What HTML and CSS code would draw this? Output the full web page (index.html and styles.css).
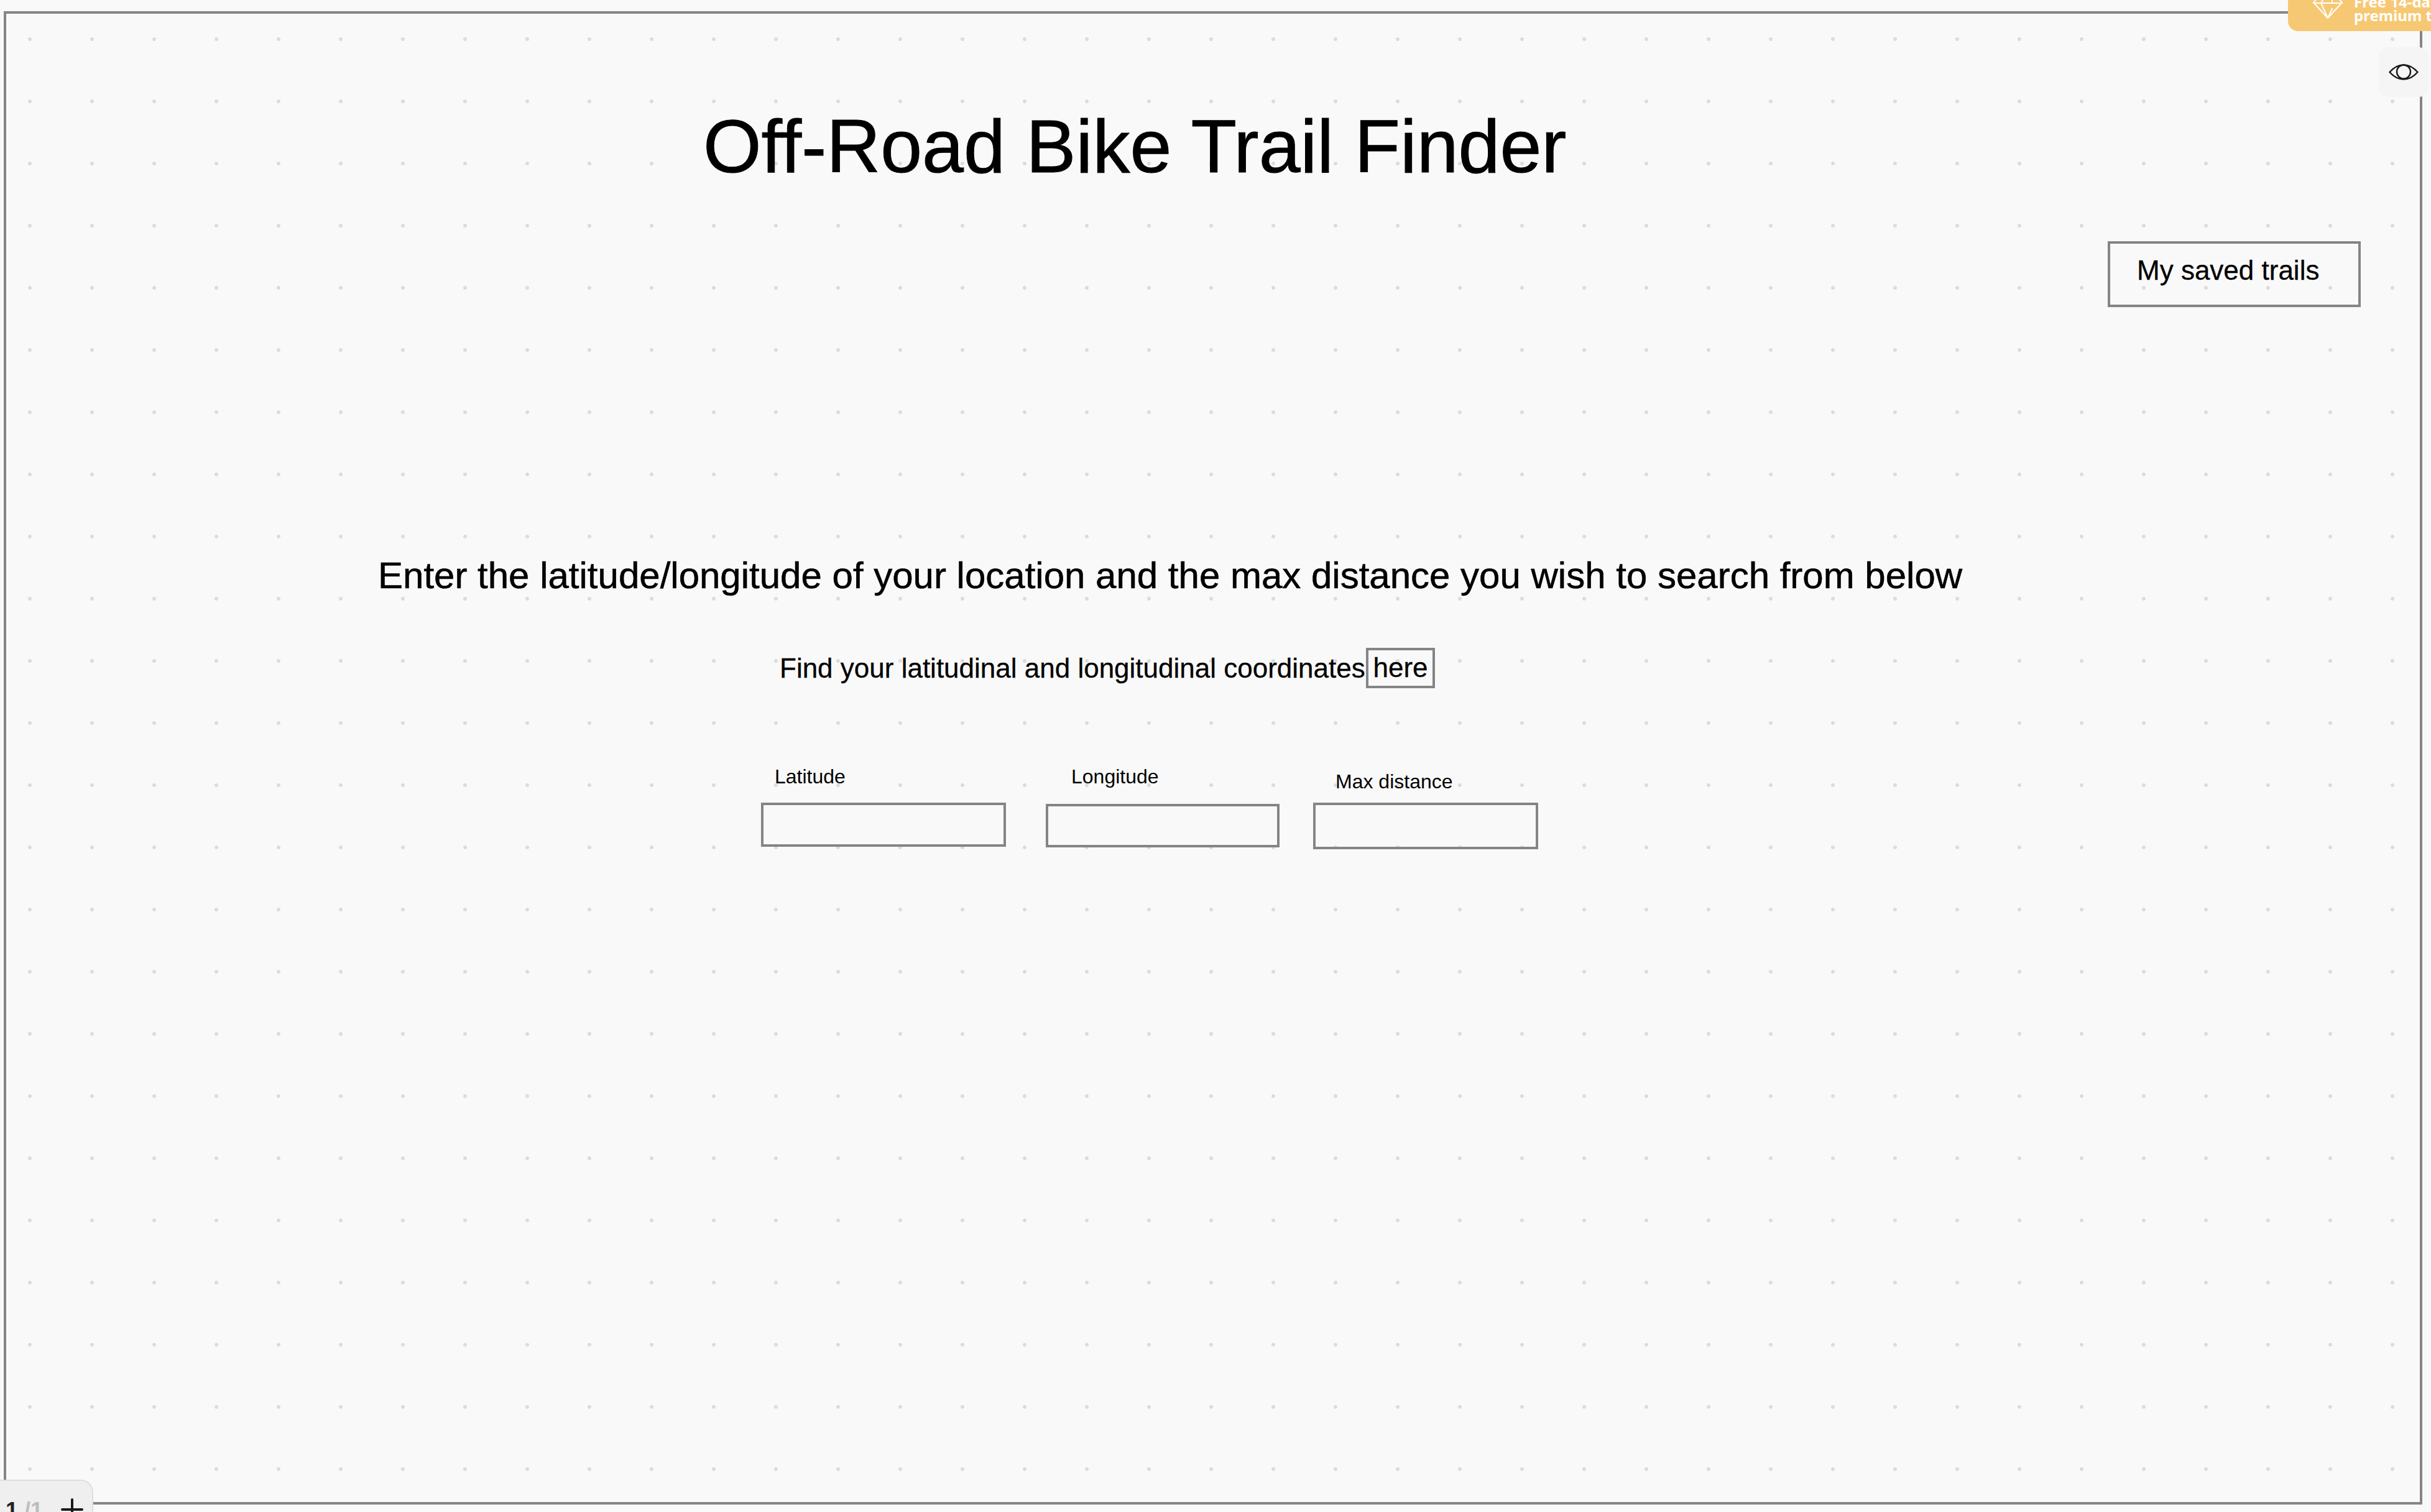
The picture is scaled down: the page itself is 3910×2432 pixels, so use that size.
FILE: index.html
```html
<!DOCTYPE html>
<html lang="en">
<head>
<meta charset="utf-8">
<title>Off-Road Bike Trail Finder</title>
<link rel="stylesheet" href="styles.css">
</head>
<body>
<main class="canvas">
  <div class="frame"></div>
  <h1 class="el title">Off-Road Bike Trail Finder</h1>
  <div class="el box saved"><span>My saved trails</span></div>
  <h2 class="el intro">Enter the latitude/longitude of your location and the max distance you wish to search from below</h2>
  <p class="el find">Find your latitudinal and longitudinal coordinates</p>
  <a class="el box here">here</a>
  <label class="el lbl lbl-lat">Latitude</label>
  <label class="el lbl lbl-lon">Longitude</label>
  <label class="el lbl lbl-max">Max distance</label>
  <div class="el box in-lat"></div>
  <div class="el box in-lon"></div>
  <div class="el box in-max"></div>
</main>
<aside class="promo">
  <svg class="gem" viewBox="0 0 48 36" fill="none" stroke="#fff" stroke-width="2" stroke-linejoin="round" stroke-linecap="round">
    <path d="M9 1 H39 L47 10 L24 35 L1 10 Z M1 11 H47 M13 11 L24 35 M31 20 L24 35 M13 11 L19 1 M31 5 V9"/>
  </svg>
  <div class="promo-text">Free 14-day<br>premium trial</div>
</aside>
<button class="eye" type="button" aria-label="Preview">
  <svg viewBox="0 0 48 26" fill="none" stroke="#1a1a1a" stroke-width="2.4">
    <path d="M1.5 13 C 9 4.5 16 1.5 24 1.5 C 32 1.5 39 4.5 46.500 13 C 39 21.500 32 24.500 24 24.500 C 16 24.500 9 21.500 1.500 13 Z"/>
    <circle cx="24" cy="12.500" r="11"/>
  </svg>
</button>
<nav class="pager">
  <span class="cur">1</span><span class="tot"> /1</span>
  <svg class="plus" viewBox="0 0 36 36" stroke="#1a1a1a" stroke-width="4" stroke-linecap="round"><path d="M18 2 V34 M2 18 H34"/></svg>
</nav>
</body>
</html>
```
FILE: styles.css
```css
html, body {
  margin: 0;
  width: 3910px;
  height: 2432px;
  overflow: hidden;
  background: #f9f9f9;
  font-family: "Liberation Sans", Arial, sans-serif;
  color: #000;
}
.canvas {
  position: relative;
  width: 3910px;
  height: 2432px;
  background-color: #f9f9f9;
  background-image: radial-gradient(circle, #dcdcdc 0, #dcdcdc 2.6px, transparent 3.4px);
  background-size: 100px 100px;
  background-position: -2px 13px;
}
.frame {
  position: absolute;
  left: 6px;
  top: 18px;
  width: 3882px;
  height: 2394px;
  border: 4px solid #858585;
}
.el { position: absolute; margin: 0; font-weight: 400; white-space: nowrap; }
.box { border: 4px solid #858585; box-sizing: border-box; }
.title { left: 1131px; top: 168px; font-size: 120.3px; line-height: 134px; -webkit-text-stroke: 1px #000; }
.saved { left: 3390px; top: 388px; width: 407px; height: 106px; display: flex; align-items: center; padding-left: 43px; font-size: 44px; -webkit-text-stroke: 0.3px #000; }
.saved span { margin-top: -12px; }
.intro { left: 608px; top: 891px; font-size: 60px; line-height: 70px; -webkit-text-stroke: 0.6px #000; }
.find { left: 1254px; top: 1050px; font-size: 44px; line-height: 50px; -webkit-text-stroke: 0.3px #000; }
.here { left: 2197px; top: 1042px; width: 111px; height: 65px; font-size: 44px; line-height: 56px; text-align: center; -webkit-text-stroke: 0.3px #000; }
.lbl { font-size: 32px; line-height: 38px; }
.lbl-lat { left: 1246px; top: 1230px; }
.lbl-lon { left: 1723px; top: 1230px; }
.lbl-max { left: 2148px; top: 1238px; }
.in-lat { left: 1224px; top: 1291px; width: 394px; height: 71px; }
.in-lon { left: 1682px; top: 1293px; width: 376px; height: 70px; }
.in-max { left: 2112px; top: 1291px; width: 362px; height: 75px; }
.promo {
  position: absolute;
  left: 3680px;
  top: -10px;
  width: 260px;
  height: 60px;
  background: #f7c873;
  border-radius: 0 0 0 16px;
  display: flex;
  align-items: flex-start;
  color: #fff;
}
.gem { width: 48px; height: 36px; margin: 4px 0 0 40px; flex: none; }
.promo-text {
  margin: 2px 0 0 18px;
  font-family: "Noto Sans", sans-serif;
  font-weight: 700;
  font-size: 24px;
  line-height: 22px;
  white-space: nowrap;
}
.eye {
  position: absolute;
  left: 3826px;
  top: 76px;
  width: 80px;
  height: 80px;
  padding: 0;
  border: 0;
  border-radius: 16px;
  background: #f5f5f5;
  display: flex;
  align-items: center;
  justify-content: center;
}
.eye svg { width: 48px; height: 26px; }
.pager {
  position: absolute;
  left: -20px;
  top: 2380px;
  width: 170px;
  height: 70px;
  background: #efefef;
  border: 2px solid #dedede;
  border-radius: 0 20px 0 0;
  font-family: "Liberation Sans", sans-serif;
  font-weight: 700;
  font-size: 36px;
  line-height: 40px;
  padding: 28px 0 0 27px;
  box-sizing: border-box;
}
.cur { color: #222; }
.tot { color: #bdbdbd; }
.plus { position: absolute; left: 116px; top: 28px; width: 36px; height: 36px; }
```
